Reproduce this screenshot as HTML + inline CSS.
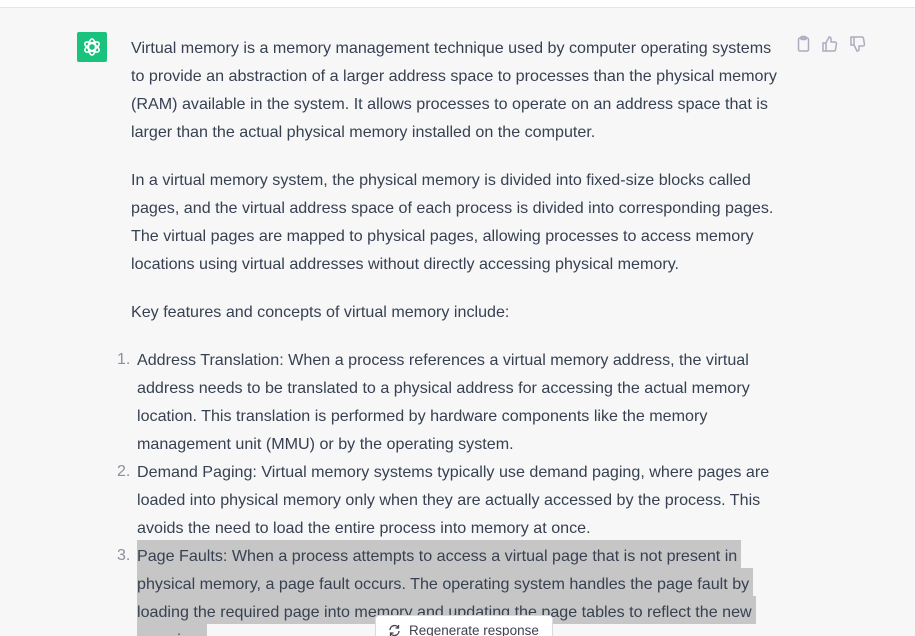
<html><head><style>
html,body{margin:0;width:915px;height:636px;overflow:hidden}
body{background:#f7f7f8;font-family:"Liberation Sans",sans-serif;color:#374151;position:relative}
.top{position:absolute;left:0;top:0;width:915px;height:7px;background:#fff;border-bottom:1px solid #e5e5e5}
.l{position:absolute;white-space:nowrap;font-size:16.1px;line-height:28px;height:28px}
.n{position:absolute;font-size:16px;line-height:28px;color:#8e8ea0;left:117px}
.hl{background:#c6c6c6;padding-right:4px;display:inline-block;height:28px}
.logo{position:absolute;left:77px;top:32px;width:30px;height:30px;background:#19c37d;border-radius:2px}
.btn{position:absolute;left:375px;top:615px;width:178px;height:30px;background:#fff;border:1px solid #d9d9e3;border-radius:4px;font-size:13.5px;color:#40414f;box-sizing:border-box;padding:7px 0 0 33px}
</style></head><body>
<div class="top"></div>
<div class="logo"><svg width="30" height="30" viewBox="0 0 30 30" fill="none" stroke="#fff" stroke-width="1.6"><g transform="translate(15 15)"><ellipse rx="3.5" ry="8" transform="rotate(0)"/><ellipse rx="3.5" ry="8" transform="rotate(60)"/><ellipse rx="3.5" ry="8" transform="rotate(120)"/></g></svg></div>
<svg style="position:absolute;left:796px;top:35px" width="74" height="18" fill="none" stroke="#acacbe" stroke-width="1.5"><rect x="2.5" y="3" width="10" height="13" rx="1.5"/><rect x="5" y="1.5" width="5" height="3" rx="1"/><path d="M30 8v8h-3V8zM30 8l3-6c1.5 0 2 1 2 2v3h4c1 0 1.6 1 1.4 2l-1 6c-.2.7-.8 1-1.5 1H30"/><path d="M58 10V2h-3v8zM58 10l3 6c1.5 0 2-1 2-2v-3h4c1 0 1.6-1 1.4-2l-1-6c-.2-.7-.8-1-1.5-1H58"/></svg>
<div class="l" style="left:131px;top:34px">Virtual memory is a memory management technique used by computer operating systems</div>
<div class="l" style="left:131px;top:62px">to provide an abstraction of a larger address space to processes than the physical memory</div>
<div class="l" style="left:131px;top:90px">(RAM) available in the system. It allows processes to operate on an address space that is</div>
<div class="l" style="left:131px;top:118px">larger than the actual physical memory installed on the computer.</div>
<div class="l" style="left:131px;top:166px">In a virtual memory system, the physical memory is divided into fixed-size blocks called</div>
<div class="l" style="left:131px;top:194px">pages, and the virtual address space of each process is divided into corresponding pages.</div>
<div class="l" style="left:131px;top:222px">The virtual pages are mapped to physical pages, allowing processes to access memory</div>
<div class="l" style="left:131px;top:250px">locations using virtual addresses without directly accessing physical memory.</div>
<div class="l" style="left:131px;top:298px">Key features and concepts of virtual memory include:</div>
<div class="n" style="top:346px">1.</div>
<div class="l" style="left:137px;top:346px">Address Translation: When a process references a virtual memory address, the virtual</div>
<div class="l" style="left:137px;top:374px">address needs to be translated to a physical address for accessing the actual memory</div>
<div class="l" style="left:137px;top:402px">location. This translation is performed by hardware components like the memory</div>
<div class="l" style="left:137px;top:430px">management unit (MMU) or by the operating system.</div>
<div class="n" style="top:458px">2.</div>
<div class="l" style="left:137px;top:458px">Demand Paging: Virtual memory systems typically use demand paging, where pages are</div>
<div class="l" style="left:137px;top:486px">loaded into physical memory only when they are actually accessed by the process. This</div>
<div class="l" style="left:137px;top:514px">avoids the need to load the entire process into memory at once.</div>
<div class="n" style="top:542px">3.</div>
<div class="l" style="left:137px;top:540px"><span class="hl" style="padding-top:2px;height:26px">Page Faults: When a process attempts to access a virtual page that is not present in</span></div>
<div class="l" style="left:137px;top:568px"><span class="hl" style="padding-top:2px;height:26px">physical memory, a page fault occurs. The operating system handles the page fault by</span></div>
<div class="l" style="left:137px;top:596px"><span class="hl" style="padding-top:2px;height:26px">loading the required page into memory and updating the page tables to reflect the new</span></div>
<div class="l" style="left:137px;top:624px"><span class="hl" style="padding-top:2px;height:26px">mapping.</span></div>
<div class="btn"><svg style="position:absolute;left:12px;top:8px" width="13" height="13" fill="none" stroke="#40414f" stroke-width="1.3"><path d="M2 6a4.5 4.5 0 0 1 8.5-2M11 7a4.5 4.5 0 0 1-8.5 2M10.5 1v3h-3M2.5 12V9h3"/></svg>Regenerate response</div>
</body></html>
